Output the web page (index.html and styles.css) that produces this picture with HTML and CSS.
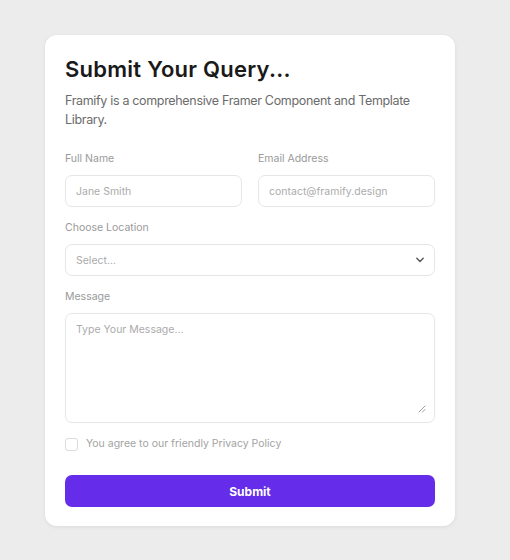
FILE: index.html
```html
<!DOCTYPE html>
<html lang="en">
<head>
<meta charset="utf-8">
<title>Submit Your Query</title>
<link rel="stylesheet" href="styles.css">
</head>
<body>
<main class="card">
  <header class="head">
    <h1 class="title">Submit Your Query...</h1>
    <p class="desc">Framify is a comprehensive Framer Component and Template Library.</p>
  </header>
  <form class="form">
    <div class="row">
      <label class="field">
        <span class="label">Full Name</span>
        <input class="input" type="text" placeholder="Jane Smith">
      </label>
      <label class="field">
        <span class="label">Email Address</span>
        <input class="input" type="email" placeholder="contact@framify.design">
      </label>
    </div>
    <label class="field">
      <span class="label">Choose Location</span>
      <span class="select-wrap">
        <select class="input select">
          <option>Select...</option>
        </select>
        <svg class="chev" width="10" height="6" viewBox="0 0 10 6" aria-hidden="true"><path d="M1.8 1.3 L5 4.4 L8.2 1.3" fill="none" stroke="#555" stroke-width="1.4" stroke-linecap="round" stroke-linejoin="round"/></svg>
      </span>
    </label>
    <label class="field">
      <span class="label">Message</span>
      <span class="area-wrap">
        <textarea class="input area" placeholder="Type Your Message..."></textarea>
        <svg class="grip" width="8" height="8" viewBox="0 0 8 8" aria-hidden="true"><path d="M7 1 L1 7 M7 4.5 L4.5 7" fill="none" stroke="#9a9a9a" stroke-width="1" stroke-linecap="round"/></svg>
      </span>
    </label>
    <label class="agree">
      <input class="check" type="checkbox">
      <span>You agree to our friendly Privacy Policy</span>
    </label>
    <button class="submit" type="button">Submit</button>
  </form>
</main>
</body>
</html>
```
FILE: styles.css
```css
* { box-sizing: border-box; }
html, body { margin: 0; }
body {
  background: #ececec;
  font-family: Inter, "Noto Sans", sans-serif;
  padding: 35px 0 0 45px;
  min-height: 560px;
}
.card {
  width: 410px;
  background: #fff;
  border-radius: 12px;
  box-shadow: 0 1px 4px rgba(0,0,0,0.07);
  padding: 20px 20px 19px;
}
.head { margin-bottom: 23px; }
.title {
  margin: 0;
  font-size: 22px;
  line-height: 28px;
  font-weight: 600;
  color: #1a1a1a;
  letter-spacing: 0.25px;
}
.desc {
  margin: 8px 0 0;
  font-size: 12.5px;
  line-height: 19px;
  color: #6b6b6b;
  letter-spacing: -0.33px;
}
.form { display: flex; flex-direction: column; gap: 14px; }
.row { display: grid; grid-template-columns: 1fr 1fr; gap: 16px; }
.field { display: flex; flex-direction: column; gap: 9px; }
.label {
  font-size: 10.5px;
  line-height: 14px;
  color: #9a9a9a;
}
.input {
  display: block;
  width: 100%;
  height: 32px;
  border: 1px solid #e6e6e6;
  border-radius: 7px;
  padding: 0 10px;
  font-family: inherit;
  font-size: 10.5px;
  color: #444;
  background: #fff;
  outline: none;
}
.input::placeholder { color: #ababab; }
.select-wrap, .area-wrap { position: relative; display: block; }
.select {
  appearance: none;
  -webkit-appearance: none;
  color: #ababab;
}
.chev { position: absolute; right: 10px; top: 13px; }
.area {
  height: 110px;
  padding: 9px 10px;
  line-height: 14px;
  resize: none;
}
.grip { position: absolute; right: 9px; bottom: 10px; }
.agree {
  display: flex;
  align-items: center;
  gap: 8px;
  font-size: 10.5px;
  line-height: 14px;
  color: #a3a3a3;
}
.check {
  appearance: none;
  -webkit-appearance: none;
  margin: 0;
  width: 13px;
  height: 13px;
  border: 1px solid #dcdcdc;
  border-radius: 3px;
  background: #fff;
}
.submit {
  margin-top: 10px;
  height: 32px;
  border: 0;
  border-radius: 7px;
  background: #652ce9;
  color: #fff;
  font-family: inherit;
  font-size: 12px;
  font-weight: 700;
}
```
